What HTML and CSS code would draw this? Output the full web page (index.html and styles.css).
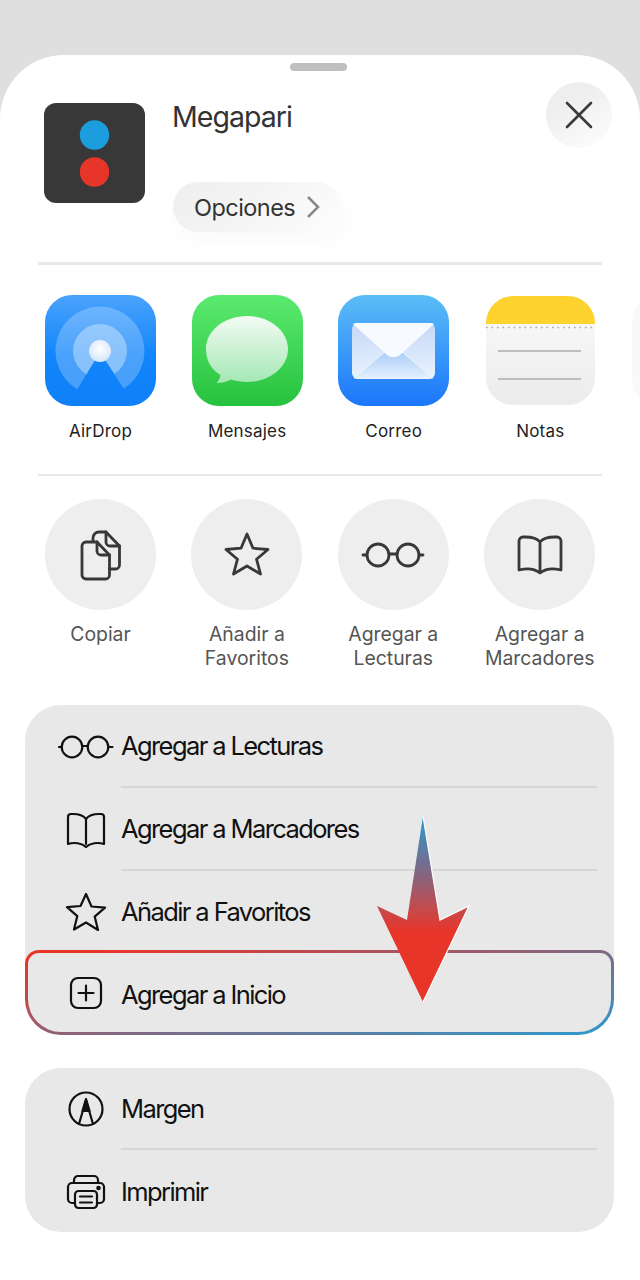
FILE: index.html
```html
<!DOCTYPE html>
<html lang="es">
<head>
<meta charset="utf-8">
<title>Megapari</title>
<link rel="stylesheet" href="styles.css">
</head>
<body>
<main class="sheet">
  <div class="handle"></div>
  <header class="head">
    <svg class="app-logo" viewBox="0 0 101 100"><rect width="101" height="100" rx="12" fill="#383838"/><circle cx="50.500" cy="32" r="14.700" fill="#1c9ddd"/><circle cx="50.500" cy="69" r="14.700" fill="#e8352a"/></svg>
    <div class="head-info">
      <h1 class="title">Megapari</h1>
      <button class="options">Opciones<svg class="chev" viewBox="0 0 14 24"><path d="M2 2l10 10L2 22" fill="none" stroke="#8a8a8a" stroke-width="2.600"/></svg></button>
    </div>
    <button class="close" aria-label="Cerrar"><svg viewBox="0 0 30 30" class="close-x"><path d="M3 3l24 24M27 3L3 27" stroke="#3a3a3a" stroke-width="2.600" stroke-linecap="round"/></svg></button>
  </header>
  <hr class="rule rule-top">

  <section class="apps">
    <div class="cell">
      <svg class="tile" viewBox="0 0 111 111">
        <defs>
          <linearGradient id="ga" x1="0" y1="0" x2="0" y2="1"><stop offset="0" stop-color="#4aa3fb"/><stop offset=".55" stop-color="#1285fb"/><stop offset="1" stop-color="#0f80f8"/></linearGradient>
          <mask id="ma"><rect width="111" height="111" fill="#fff"/><path d="M55 57L22 111H90Z" fill="#000"/></mask>
          <radialGradient id="gb" cx=".5" cy=".4" r=".7"><stop offset="0" stop-color="#fff"/><stop offset="1" stop-color="#cfe2fb"/></radialGradient>
        </defs>
        <rect width="111" height="111" rx="27" fill="url(#ga)"/>
        <g mask="url(#ma)"><circle cx="55" cy="56" r="44.500" fill="#fff" fill-opacity=".24"/><circle cx="55" cy="56" r="27" fill="#fff" fill-opacity=".34"/></g>
        <circle cx="55" cy="56" r="11" fill="url(#gb)"/>
      </svg>
      <span class="app-name">AirDrop</span>
    </div>
    <div class="cell">
      <svg class="tile" viewBox="0 0 111 111">
        <defs>
          <linearGradient id="gm" x1="0" y1="0" x2="0" y2="1"><stop offset="0" stop-color="#5bea70"/><stop offset="1" stop-color="#27c23d"/></linearGradient>
          <linearGradient id="gn" x1="0" y1="0" x2="0" y2="1"><stop offset="0" stop-color="#f3fbf4"/><stop offset="1" stop-color="#a4e8b3"/></linearGradient>
        </defs>
        <rect width="111" height="111" rx="27" fill="url(#gm)"/>
        <path d="M14 54c0-18 18-33 41-33s41 15 41 33-18 33-41 33c-6 0-11-1-16-2.500-4 2.500-9 3.500-14.500 3.500 2-2 3.500-4.500 4-8C18 74 14 64 14 54Z" fill="url(#gn)"/>
      </svg>
      <span class="app-name">Mensajes</span>
    </div>
    <div class="cell">
      <svg class="tile" viewBox="0 0 111 111">
        <defs>
          <linearGradient id="gc" x1="0" y1="0" x2="0" y2="1"><stop offset="0" stop-color="#5bbdf6"/><stop offset="1" stop-color="#1b76fb"/></linearGradient>
          <linearGradient id="gd" x1="0" y1="0" x2="0" y2="1"><stop offset="0" stop-color="#c5d8f6"/><stop offset="1" stop-color="#eaf3fe"/></linearGradient>
          <linearGradient id="ge" x1="0" y1="0" x2="0" y2="1"><stop offset="0" stop-color="#a9ccf8"/><stop offset="1" stop-color="#e2effd"/></linearGradient>
        </defs>
        <rect width="111" height="111" rx="27" fill="url(#gc)"/>
        <rect x="14" y="28" width="83" height="56" rx="6" fill="url(#gd)"/>
        <path d="M16 83L48 56h15l32 27Z" fill="url(#ge)" stroke="#f2f7fe" stroke-width=".800"/>
        <path d="M15 29c1-1 2-1 5-1h71c3 0 4 0 5 1L62 60c-4 3-9 3-13 0Z" fill="#f7fafe"/>
      </svg>
      <span class="app-name">Correo</span>
    </div>
    <div class="cell">
      <svg class="tile" viewBox="0 0 111 111">
        <defs>
          <linearGradient id="gf" x1="0" y1="0" x2="0" y2="1"><stop offset="0" stop-color="#fbfbfb"/><stop offset="1" stop-color="#ebebeb"/></linearGradient>
          <clipPath id="cn"><rect x="1" y="1" width="109" height="109" rx="27"/></clipPath>
        </defs>
        <g clip-path="url(#cn)">
          <rect width="111" height="111" fill="url(#gf)"/>
          <rect width="111" height="29" fill="#fed330"/>
          <path d="M1 32.500H110" stroke="#a9a9a0" stroke-width="1.600" stroke-dasharray="1.600 3.900"/>
          <rect x="13" y="55" width="83" height="2" fill="#bdbdbd"/>
          <rect x="13" y="83" width="83" height="2" fill="#bdbdbd"/>
        </g>
      </svg>
      <span class="app-name">Notas</span>
    </div>
    <div class="cell"><div class="tile tile-next"></div></div>
  </section>
  <hr class="rule rule-mid">

  <section class="actions">
    <div class="cell">
      <div class="disc"><svg class="disc-icon" width="50" height="60" viewBox="0 0 50 60"><path d="M10 17h11l12.500 13v20a4 4 0 0 1-4 4H10a4 4 0 0 1-4-4V21a4 4 0 0 1 4-4Z"/><path d="M21 17v9a4 4 0 0 0 4 4h8.500"/><path d="M17 16v-3a6 6 0 0 1 6-6h7l13.500 14v19a4 4 0 0 1-4 4h-6"/><path d="M30 7v10a4 4 0 0 0 4 4h9.500"/></svg></div>
      <span class="action-name">Copiar</span>
    </div>
    <div class="cell">
      <div class="disc"><svg class="disc-icon" width="50" height="50" viewBox="0 0 50 50"><path d="M25 4l6 14.200 15 1.300-11.500 9.700 4 14.800L25 36l-13.500 8 4-14.800L4 19.500l15-1.300Z"/></svg></div>
      <span class="action-name">Añadir a<br>Favoritos</span>
    </div>
    <div class="cell">
      <div class="disc"><svg class="disc-icon" width="66" height="30" viewBox="0 0 66 30"><circle cx="18" cy="15" r="11"/><circle cx="48" cy="15" r="11"/><path d="M29 14h8M3 15h4M59 15h4"/></svg></div>
      <span class="action-name">Agregar a<br>Lecturas</span>
    </div>
    <div class="cell">
      <div class="disc"><svg class="disc-icon" width="50" height="44" viewBox="0 0 50 44"><path d="M25 38V9C22 5 16 4 10 4H8a4 4 0 0 0-4 4v29c8-2 16-1 21 3 5-4 13-5 21-3V8a4 4 0 0 0-4-4h-2c-6 0-12 1-15 5"/></svg></div>
      <span class="action-name">Agregar a<br>Marcadores</span>
    </div>
  </section>

  <section class="group group-first">
    <div class="row">
      <svg class="row-icon row-icon-wide" width="56" height="30" viewBox="0 0 56 30"><circle cx="14" cy="15" r="10.300"/><circle cx="40" cy="15" r="10.300"/><path d="M24.500 14h5M1 15h3M50.500 15h4"/></svg>
      <div class="row-label">Agregar a Lecturas</div>
    </div>
    <div class="row">
      <svg class="row-icon" width="52" height="36" viewBox="0 0 52 36"><path d="M26 32V7C23 3 18 2 13 2h-2a3 3 0 0 0-3 3v27c6-2 14-1 18 3 4-4 12-5 18-3V5a3 3 0 0 0-3-3h-2c-5 0-10 1-13 5"/></svg>
      <div class="row-label">Agregar a Marcadores</div>
    </div>
    <div class="row row-last">
      <svg class="row-icon" width="52" height="40" viewBox="0 2 52 40"><path d="M26 3l5.500 12.500 13.500 1.200-10.300 8.900 3.300 13.400L26 31.500 14 38.500l3.300-13.400L7 16.200l13.500-1.200Z"/></svg>
      <div class="row-label">Añadir a Favoritos</div>
    </div>
    <div class="row row-home">
      <svg class="row-icon" width="52" height="34" viewBox="0 0 52 34"><rect x="11" y="2" width="30" height="30" rx="7"/><path d="M26 9.500v15M18.500 17h15"/></svg>
      <div class="row-label">Agregar a Inicio</div>
    </div>
    <svg class="arrow" width="96" height="192" viewBox="0 0 96 192">
      <defs><linearGradient id="gr" x1="0" y1="0" x2="0" y2="1"><stop offset="0" stop-color="#2a9bd0"/><stop offset=".28" stop-color="#7a6a8a"/><stop offset=".5" stop-color="#c54a4c"/><stop offset=".62" stop-color="#e8352a"/><stop offset="1" stop-color="#e8352a"/></linearGradient></defs>
      <path d="M48 2L65 106l29-14-46 96L2 92l30 14Z" fill="url(#gr)"/>
      <path d="M48 2L65 106l29-14-46 96" fill="none" stroke="#fff" stroke-width="1.200"/>
    </svg>
  </section>

  <section class="group group-second">
    <div class="row row-short">
      <svg class="row-icon" width="52" height="36" viewBox="0 0 52 36"><circle cx="26" cy="18" r="16.500"/><path d="M19 33l7-24 7 24M22.500 20h7"/><path d="M26 8l-3.500 12h7Z" fill="#111"/></svg>
      <div class="row-label">Margen</div>
    </div>
    <div class="row row-short row-last">
      <svg class="row-icon" width="52" height="38" viewBox="0 -2 52 38"><path d="M14 9V6a4 4 0 0 1 4-4h16a4 4 0 0 1 4 4v3"/><path d="M15 29h-3a4 4 0 0 1-4-4V13a4 4 0 0 1 4-4h28a4 4 0 0 1 4 4v12a4 4 0 0 1-4 4h-3"/><rect x="15" y="17" width="22" height="17" rx="3.500"/><path d="M20 22.500h12M20 28.500h12"/><circle cx="38.500" cy="14" r="1.200" fill="#111"/></svg>
      <div class="row-label">Imprimir</div>
    </div>
  </section>
</main>
</body>
</html>
```
FILE: styles.css
```css
* { box-sizing: border-box; }
html, body { margin: 0; padding: 0; }
body {
  width: 640px;
  height: 1280px;
  overflow: hidden;
  background: #dfdfdf;
  padding-top: 55px;
  font-family: Inter, "Liberation Sans", sans-serif;
}
.sheet {
  background: #fff;
  height: 1225px;
  border-radius: 64px 64px 0 0;
  padding-top: 8px;
  overflow: hidden;
}
.handle {
  width: 57px;
  height: 8px;
  margin-left: 290px;
  border-radius: 4px;
  background: #c0c0c0;
}
.head {
  display: flex;
  align-items: flex-start;
  padding: 0 28px 0 44px;
  height: 191px;
}
.app-logo {
  width: 101px;
  height: 100px;
  margin-top: 32px;
  flex: none;
}
.head-info {
  flex: 1;
  margin-left: 28px;
  padding-top: 29px;
}
.title {
  margin: 0 0 0 -1px;
  font-size: 28.500px;
  line-height: 34px;
  font-weight: 400;
  letter-spacing: -.95px;
  color: #333;
}
.options {
  display: flex;
  align-items: center;
  gap: 11px;
  height: 50px;
  width: 169px;
  margin-top: 48px;
  padding: 0 0 0 21px;
  border: 0;
  border-radius: 25px;
  background: linear-gradient(135deg, #eeeeee, #f8f8f8 70%, #fdfdfd);
  box-shadow: 4px 10px 18px rgba(0, 0, 0, .025);
  font: 400 23.500px Inter, "Liberation Sans", sans-serif;
  letter-spacing: -.55px;
  color: #333;
}
.chev { width: 14px; height: 24px; }
.close {
  flex: none;
  width: 66px;
  height: 66px;
  margin-top: 11px;
  padding: 0;
  border: 0;
  border-radius: 50%;
  background: linear-gradient(150deg, #eeeeee 30%, #f6f6f6 65%, #ffffff);
  display: flex;
  align-items: center;
  justify-content: center;
}
.close-x { width: 30px; height: 30px; }
.rule {
  border: 0;
  margin: 0 38px;
  background: #e8e8e8;
}
.rule-top { height: 3px; }
.rule-mid { height: 2px; margin-top: 0; }
.apps {
  display: flex;
  gap: 35.6px;
  padding: 30px 0 0 45px;
  height: 209px;
  overflow: hidden;
}
.cell {
  flex: none;
  width: 111px;
  display: flex;
  flex-direction: column;
  align-items: center;
}
.tile {
  display: block;
  width: 111px;
  height: 111px;
  flex: none;
}
.tile-next {
  background: #f9f9f9;
  border-radius: 27px;
  margin-left: 1px;
}
.app-name {
  margin-top: 14px;
  font-size: 17px;
  line-height: 22px;
  letter-spacing: .2px;
  color: #222;
  white-space: nowrap;
}
.actions {
  display: flex;
  gap: 35.4px;
  padding: 23px 0 0 45px;
  height: 229px;
}
.disc {
  width: 111px;
  height: 111px;
  border-radius: 50%;
  background: #eeeeee;
  display: flex;
  align-items: center;
  justify-content: center;
}
.disc-icon {
  fill: none;
  stroke: #383838;
  stroke-width: 2.800;
  stroke-linejoin: round;
  stroke-linecap: round;
}
.action-name {
  margin-top: 12px;
  font-size: 19.400px;
  line-height: 24px;
  text-align: center;
  color: #555;
  white-space: nowrap;
}
.group {
  position: relative;
  margin: 0 26px 0 25px;
  border-radius: 36px;
  background: #e8e8e8;
}
.group-second { margin-top: 33px; }
.row {
  display: flex;
  align-items: stretch;
  height: 83px;
}
.row-short { height: 82px; }
.row-icon {
  align-self: center;
  flex: none;
  margin: 0 9px 0 35px;
  fill: none;
  stroke: #111;
  stroke-width: 2.200;
  stroke-linejoin: round;
  stroke-linecap: round;
}
.row-icon-wide { margin: 0 7px 0 33px; }
.row-label {
  flex: 1;
  display: flex;
  align-items: center;
  margin-right: 17px;
  border-bottom: 2px solid #d6d6d6;
  font-size: 25.500px;
  letter-spacing: -1.6px;
  color: #111;
  white-space: nowrap;
}
.row-last .row-label, .row-home .row-label { border-bottom: 0; }
.group-first .row-last .row-label { padding-bottom: 2px; }
.row-home {
  height: 85px;
  margin-top: -4px;
  border: 3px solid transparent;
  border-radius: 14px 14px 36px 36px;
  background:
    linear-gradient(#e8e8e8, #e8e8e8) padding-box,
    linear-gradient(170deg, #e8352a 0%, #e8352a 8%, #7f6a85 55%, #2a9bd0 100%) border-box;
}
.row-home .row-icon { margin-left: 32px; }
.row-home .row-label { margin-right: 0; padding-top: 3px; }
.arrow {
  position: absolute;
  left: 350px;
  top: 109px;
}
```
